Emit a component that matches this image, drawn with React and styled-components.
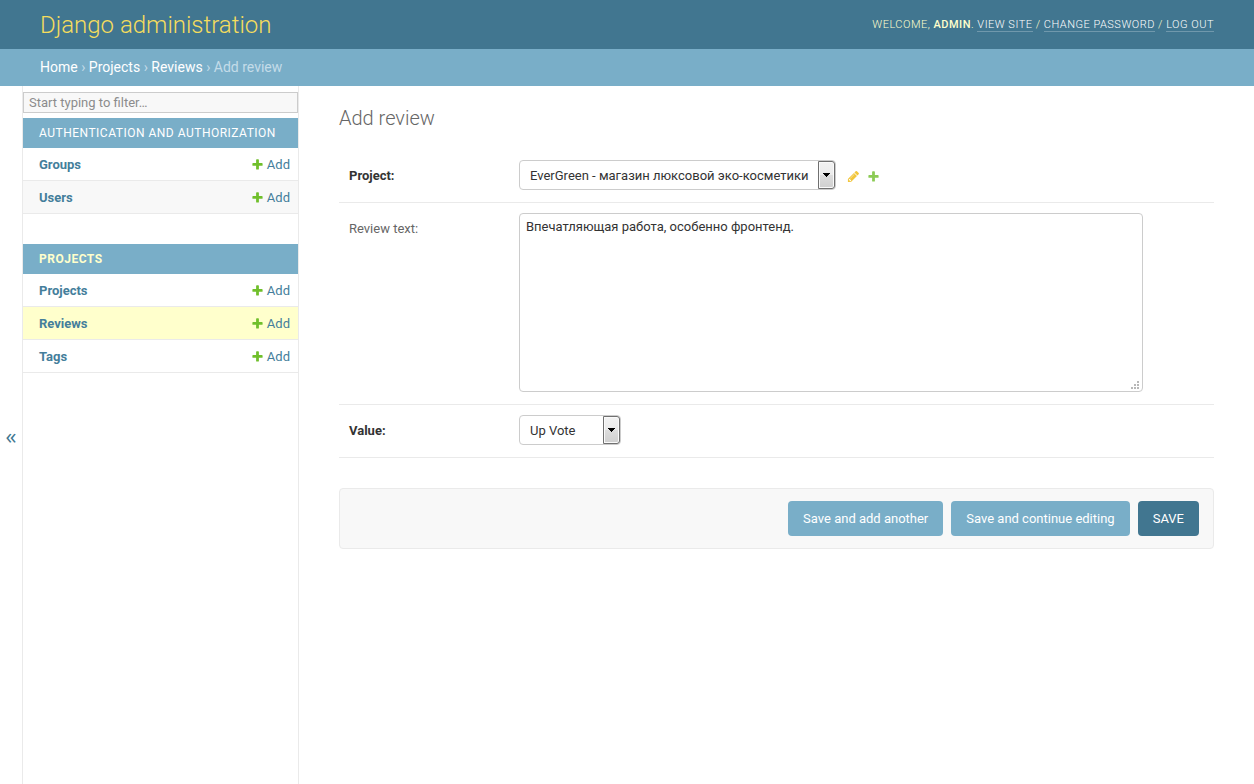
import React from "react";
import styled, { createGlobalStyle, css } from "styled-components";

const GlobalStyle = createGlobalStyle`
  *, *::before, *::after { box-sizing: border-box; }
  body {
    margin: 0;
    background: #fff;
    color: #333;
    font: 14px/20px Roboto, "Liberation Sans", sans-serif;
  }
  input, select, textarea, button { font-family: inherit; margin: 0; }
  a { color: #447e9b; text-decoration: none; }
`;

const Page = styled.div`
  display: flex;
  flex-direction: column;
  min-height: 100vh;
`;

const Header = styled.header`
  display: flex;
  align-items: center;
  justify-content: space-between;
  padding: 10px 40px 9px;
  background: #417690;
  color: #ffc;
`;

const SiteName = styled.h1`
  margin: 0;
  font-size: 24px;
  line-height: 30px;
  font-weight: 300;
  a { color: #f5dd5d; }
`;

const UserTools = styled.nav`
  font-size: 11px;
  line-height: 14px;
  font-weight: 300;
  letter-spacing: 0.5px;
  text-transform: uppercase;
  strong { font-weight: 500; }
  a {
    color: #fff;
    border-bottom: 1px solid rgba(255, 255, 255, 0.25);
  }
`;

const Breadcrumbs = styled.nav`
  padding: 8px 40px 9px;
  background: #79aec8;
  color: #c4dce8;
  a { color: #fff; }
`;

const Body = styled.div`
  display: flex;
  flex: 1;
`;

const SidebarToggle = styled.button`
  flex: 0 0 23px;
  padding: 0;
  border: 0;
  border-right: 1px solid #eaeaea;
  background: #fff;
  color: #417690;
  && { font-family: "Open Sans", sans-serif; }
  font-size: 22px;
  line-height: 20px;
  cursor: pointer;
`;

const Sidebar = styled.nav`
  flex: 0 0 276px;
  padding-top: 6px;
  border-right: 1px solid #eaeaea;
`;

const FilterInput = styled.input`
  display: block;
  width: 100%;
  height: 21px;
  padding: 0 5px;
  border: 1px solid #ccc;
  background: #f8f8f8;
  color: #333;
  font-size: 13px;
  &::placeholder { color: #8c8c8c; }
`;

const AppTable = styled.table`
  width: 100%;
  margin: 5px 0 30px;
  border-collapse: separate;
  border-spacing: 0;
`;

const AppCaption = styled.caption`
  padding: 5px 16px;
  background: #79aec8;
  font-size: 12px;
  line-height: 20px;
  font-weight: ${(p) => (p.$current ? 700 : 400)};
  letter-spacing: 0.5px;
  text-align: left;
  text-transform: uppercase;
  a { color: ${(p) => (p.$current ? "#ffc" : "#fff")}; }
`;

const ModelRow = styled.tr`
  background: ${(p) => (p.$current ? "#ffc" : p.$shaded ? "#f8f8f8" : "#fff")};
  font-size: 13px;
  line-height: 15px;
  th, td { border-bottom: 1px solid #eaeaea; }
`;

const ModelName = styled.th`
  padding: 9px 16px 8px;
  font-weight: 700;
  text-align: left;
`;

const ModelAction = styled.td`
  padding: 9px 8px 8px;
  a {
    display: flex;
    align-items: center;
    justify-content: flex-end;
    gap: 3px;
  }
`;

const Main = styled.main`
  flex: 1;
  min-width: 0;
  padding: 20px 40px;
`;

const PageTitle = styled.h2`
  margin: 0 0 20px;
  color: #666;
  font-size: 20px;
  line-height: 24px;
  font-weight: 300;
`;

const FormRow = styled.div`
  display: flex;
  align-items: flex-start;
  padding: 10px 10px 12px;
  border-bottom: 1px solid #eaeaea;
`;

const FieldLabel = styled.label`
  flex: 0 0 170px;
  padding-top: 8px;
  font-size: 13px;
  line-height: 15px;
  color: ${(p) => (p.$required ? "#333" : "#666")};
  font-weight: ${(p) => (p.$required ? 700 : 400)};
`;

const SelectBox = styled.div`
  position: relative;
  width: ${(p) => p.$width}px;
`;

const Select = styled.select`
  display: block;
  appearance: none;
  width: 100%;
  height: 30px;
  padding: 0 18px 0 10px;
  border: 1px solid #ccc;
  border-radius: 4px;
  background: #fff;
  color: #333;
  font-size: 13px;
`;

const DropArrow = styled.span`
  position: absolute;
  top: 1px;
  right: 1px;
  bottom: 1px;
  width: 17px;
  display: grid;
  place-items: center;
  border: 1px solid #707070;
  border-radius: 0 3px 3px 0;
  background: linear-gradient(#f2f2f2, #ebebeb 50%, #ddd 50%, #cfcfcf);
  box-shadow: inset 0 0 0 1px #fafafa;
  pointer-events: none;
`;

const TextArea = styled.textarea`
  width: 624px;
  max-width: 100%;
  height: 179px;
  padding: 5px 6px;
  border: 1px solid #ccc;
  border-radius: 4px;
  background: #fff;
  color: #333;
  font-size: 13px;
  line-height: 16px;
  resize: vertical;
  &::-webkit-resizer {
    background:
      linear-gradient(#b8b8b8, #b8b8b8) 10px 5px / 2px 2px no-repeat,
      linear-gradient(#b8b8b8, #b8b8b8) 7px 8px / 2px 2px no-repeat,
      linear-gradient(#b8b8b8, #b8b8b8) 10px 8px / 2px 2px no-repeat,
      linear-gradient(#b8b8b8, #b8b8b8) 4px 11px / 2px 2px no-repeat,
      linear-gradient(#b8b8b8, #b8b8b8) 7px 11px / 2px 2px no-repeat,
      linear-gradient(#b8b8b8, #b8b8b8) 10px 11px / 2px 2px no-repeat;
  }
`;

const RelatedLinks = styled.div`
  display: flex;
  gap: 7px;
  padding: 10px 0 0 11px;
  opacity: 0.8;
`;

const Icon = styled.svg`
  display: block;
  flex: none;
  width: 13px;
  height: 13px;
`;

const SubmitRow = styled.div`
  display: flex;
  justify-content: flex-end;
  gap: 8px;
  margin-top: 30px;
  padding: 12px 14px;
  border: 1px solid #eaeaea;
  border-radius: 4px;
  background: #f8f8f8;
`;

const SubmitButton = styled.button`
  height: 35px;
  padding: 0 15px;
  border: 0;
  border-radius: 4px;
  background: #79aec8;
  color: #fff;
  font-size: 13px;
  cursor: pointer;
  ${(p) =>
    p.$primary &&
    css`
      background: #417690;
      text-transform: uppercase;
    `}
`;

const PlusIcon = () => (
  <Icon viewBox="0 0 1792 1792" aria-hidden="true">
    <path
      fill="#70bf2b"
      d="M1600 796v192q0 40-28 68t-68 28h-416v416q0 40-28 68t-68 28h-192q-40 0-68-28t-28-68v-416h-416q-40 0-68-28t-28-68v-192q0-40 28-68t68-28h416v-416q0-40 28-68t68-28h192q40 0 68 28t28 68v416h416q40 0 68 28t28 68z"
    />
  </Icon>
);

const PencilIcon = () => (
  <Icon viewBox="0 0 1792 1792" aria-hidden="true">
    <path
      fill="#efb80b"
      d="M491 1536l91-91-235-235-91 91v107h128v128h107zm523-928q0-22-22-22-10 0-17 7l-542 542q-7 7-7 17 0 22 22 22 10 0 17-7l542-542q7-7 7-17zm-54-192l416 416-832 832h-416v-416zm683 96q0 53-37 90l-166 166-416-416 166-165q36-38 90-38 53 0 91 38l235 234q37 39 37 91z"
    />
  </Icon>
);

const apps = [
  { name: "Authentication and Authorization", models: ["Groups", "Users"] },
  { name: "Projects", current: true, models: ["Projects", "Reviews", "Tags"] },
];

function AppModels({ app }) {
  return (
    <AppTable>
      <AppCaption $current={app.current}>
        <a href="#app">{app.name}</a>
      </AppCaption>
      <tbody>
        {app.models.map((model, i) => (
          <ModelRow key={model} $current={model === "Reviews"} $shaded={i % 2 === 1}>
            <ModelName scope="row">
              <a href="#model">{model}</a>
            </ModelName>
            <ModelAction>
              <a href="#add">
                <PlusIcon />
                Add
              </a>
            </ModelAction>
          </ModelRow>
        ))}
      </tbody>
    </AppTable>
  );
}

function SelectField({ id, width, option }) {
  return (
    <SelectBox $width={width}>
      <Select id={id}>
        <option>{option}</option>
      </Select>
      <DropArrow>
        <svg width="7" height="4" viewBox="0 0 7 4" aria-hidden="true">
          <path d="M0 0h7v1H6v1H5v1H4v1H3V3H2V2H1V1H0z" />
        </svg>
      </DropArrow>
    </SelectBox>
  );
}

export default function App() {
  return (
    <Page>
      <GlobalStyle />
      <Header>
        <SiteName>
          <a href="#home">Django administration</a>
        </SiteName>
        <UserTools>
          Welcome, <strong>admin</strong>. <a href="#site">View site</a> /{" "}
          <a href="#password">Change password</a> / <a href="#logout">Log out</a>
        </UserTools>
      </Header>
      <Breadcrumbs>
        <a href="#home">Home</a> › <a href="#projects">Projects</a> ›{" "}
        <a href="#reviews">Reviews</a> › Add review
      </Breadcrumbs>
      <Body>
        <SidebarToggle aria-label="Toggle navigation">«</SidebarToggle>
        <Sidebar>
          <FilterInput
            type="search"
            placeholder="Start typing to filter…"
            aria-label="Filter navigation items"
          />
          {apps.map((app) => (
            <AppModels key={app.name} app={app} />
          ))}
        </Sidebar>
        <Main>
          <PageTitle>Add review</PageTitle>
          <form onSubmit={(e) => e.preventDefault()}>
            <FormRow>
              <FieldLabel htmlFor="project" $required>Project:</FieldLabel>
              <SelectField
                id="project"
                width={317}
                option="EverGreen - магазин люксовой эко-косметики"
              />
              <RelatedLinks>
                <a href="#change" aria-label="Change selected project"><PencilIcon /></a>
                <a href="#add-project" aria-label="Add another project"><PlusIcon /></a>
              </RelatedLinks>
            </FormRow>
            <FormRow>
              <FieldLabel htmlFor="text">Review text:</FieldLabel>
              <TextArea
                id="text"
                spellCheck={false}
                defaultValue="Впечатляющая работа, особенно фронтенд."
              />
            </FormRow>
            <FormRow>
              <FieldLabel htmlFor="value" $required>Value:</FieldLabel>
              <SelectField id="value" width={102} option="Up Vote" />
            </FormRow>
            <SubmitRow>
              <SubmitButton>Save and add another</SubmitButton>
              <SubmitButton>Save and continue editing</SubmitButton>
              <SubmitButton $primary>Save</SubmitButton>
            </SubmitRow>
          </form>
        </Main>
      </Body>
    </Page>
  );
}
